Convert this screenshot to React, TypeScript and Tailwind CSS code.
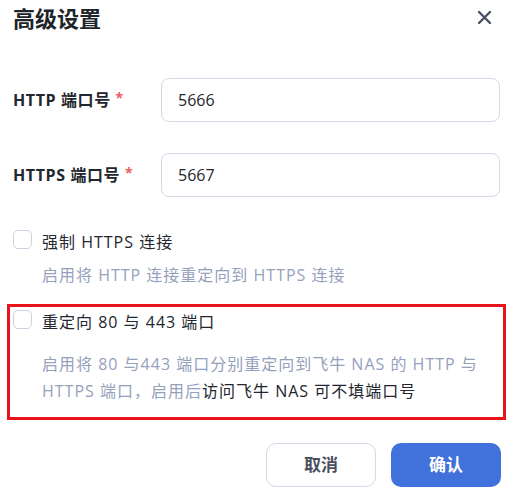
import React from "react";

function Checkbox() {
  return <div className="w-[19px] h-[19px] shrink-0 rounded-[5px] border border-[#cbd3e1] bg-white" />;
}

export default function App() {
  return (
    <div className="w-[513px] h-[497px] bg-white font-['Open_Sans','Noto_Sans_CJK_SC',sans-serif] text-[#23262e]">
      <div className="flex items-center justify-between pl-[13px] pr-[21px] pt-[2px] h-[32px]">
        <div className="text-[22px] font-bold leading-[30px] text-[#202328] font-['Noto_Sans_CJK_SC',sans-serif]">高级设置</div>
        <svg width="15" height="15" viewBox="0 0 15 15" className="mt-[1px]">
          <path d="M2 2 L13 13 M13 2 L2 13" stroke="#4a5066" strokeWidth="2.4" strokeLinecap="round" />
        </svg>
      </div>

      <div className="mt-[46px] flex items-center px-[13px]">
        <div className="w-[148px] text-[16px] font-bold leading-[24px] tracking-[0.6px] text-[#23262e]">
          HTTP 端口号 <span className="text-[#ef5a5f] relative top-[-3px] text-[14px]">*</span>
        </div>
        <div className="flex-1 h-[44px] rounded-[8px] border border-[#d3dae6] flex items-center pl-[16px] text-[16px] text-[#23262e]">
          5666
        </div>
      </div>

      <div className="mt-[31px] flex items-center px-[13px]">
        <div className="w-[148px] text-[16px] font-bold leading-[24px] tracking-[0.6px] text-[#23262e]">
          HTTPS 端口号 <span className="text-[#ef5a5f] relative top-[-3px] text-[14px]">*</span>
        </div>
        <div className="flex-1 h-[44px] rounded-[8px] border border-[#d3dae6] flex items-center pl-[16px] text-[16px] text-[#23262e]">
          5667
        </div>
      </div>

      <div className="mt-[33px] px-[13px] tracking-[1px]">
        <div className="flex items-start gap-[10px]">
          <Checkbox />
          <div className="text-[16px] leading-[24px] text-[#23262e]">强制 HTTPS 连接</div>
        </div>
        <div className="mt-[9px] pl-[29px] text-[16px] leading-[24px] text-[#95a1bc]">
          启用将 HTTP 连接重定向到 HTTPS 连接
        </div>
      </div>

      <div className="mt-[17px] mx-[7px] border-[3px] border-[#e8141c] pt-[3px] pb-[12px] pl-[3px] tracking-[1px]">
        <div className="flex items-start gap-[10px]">
          <Checkbox />
          <div className="text-[16px] leading-[24px] text-[#23262e]">重定向 80 与 443 端口</div>
        </div>
        <div className="mt-[17px] pl-[29px] text-[16px] leading-[27px] text-[#95a1bc] whitespace-nowrap">
          启用将 80 与443 端口分别重定向到飞牛 NAS 的 HTTP 与
          <br />
          HTTPS 端口，启用后<span className="text-[#23262e]">访问飞牛 NAS 可不填端口号</span>
        </div>
      </div>

      <div className="mt-[23px] flex justify-end gap-[15px] pr-[12px]">
        <button className="w-[110px] h-[44px] rounded-[10px] border border-[#d3dae6] bg-white text-[17px] font-bold text-[#4a4f5e]">
          取消
        </button>
        <button className="w-[110px] h-[44px] rounded-[10px] bg-[#4171db] text-[17px] font-bold text-white">
          确认
        </button>
      </div>
    </div>
  );
}
